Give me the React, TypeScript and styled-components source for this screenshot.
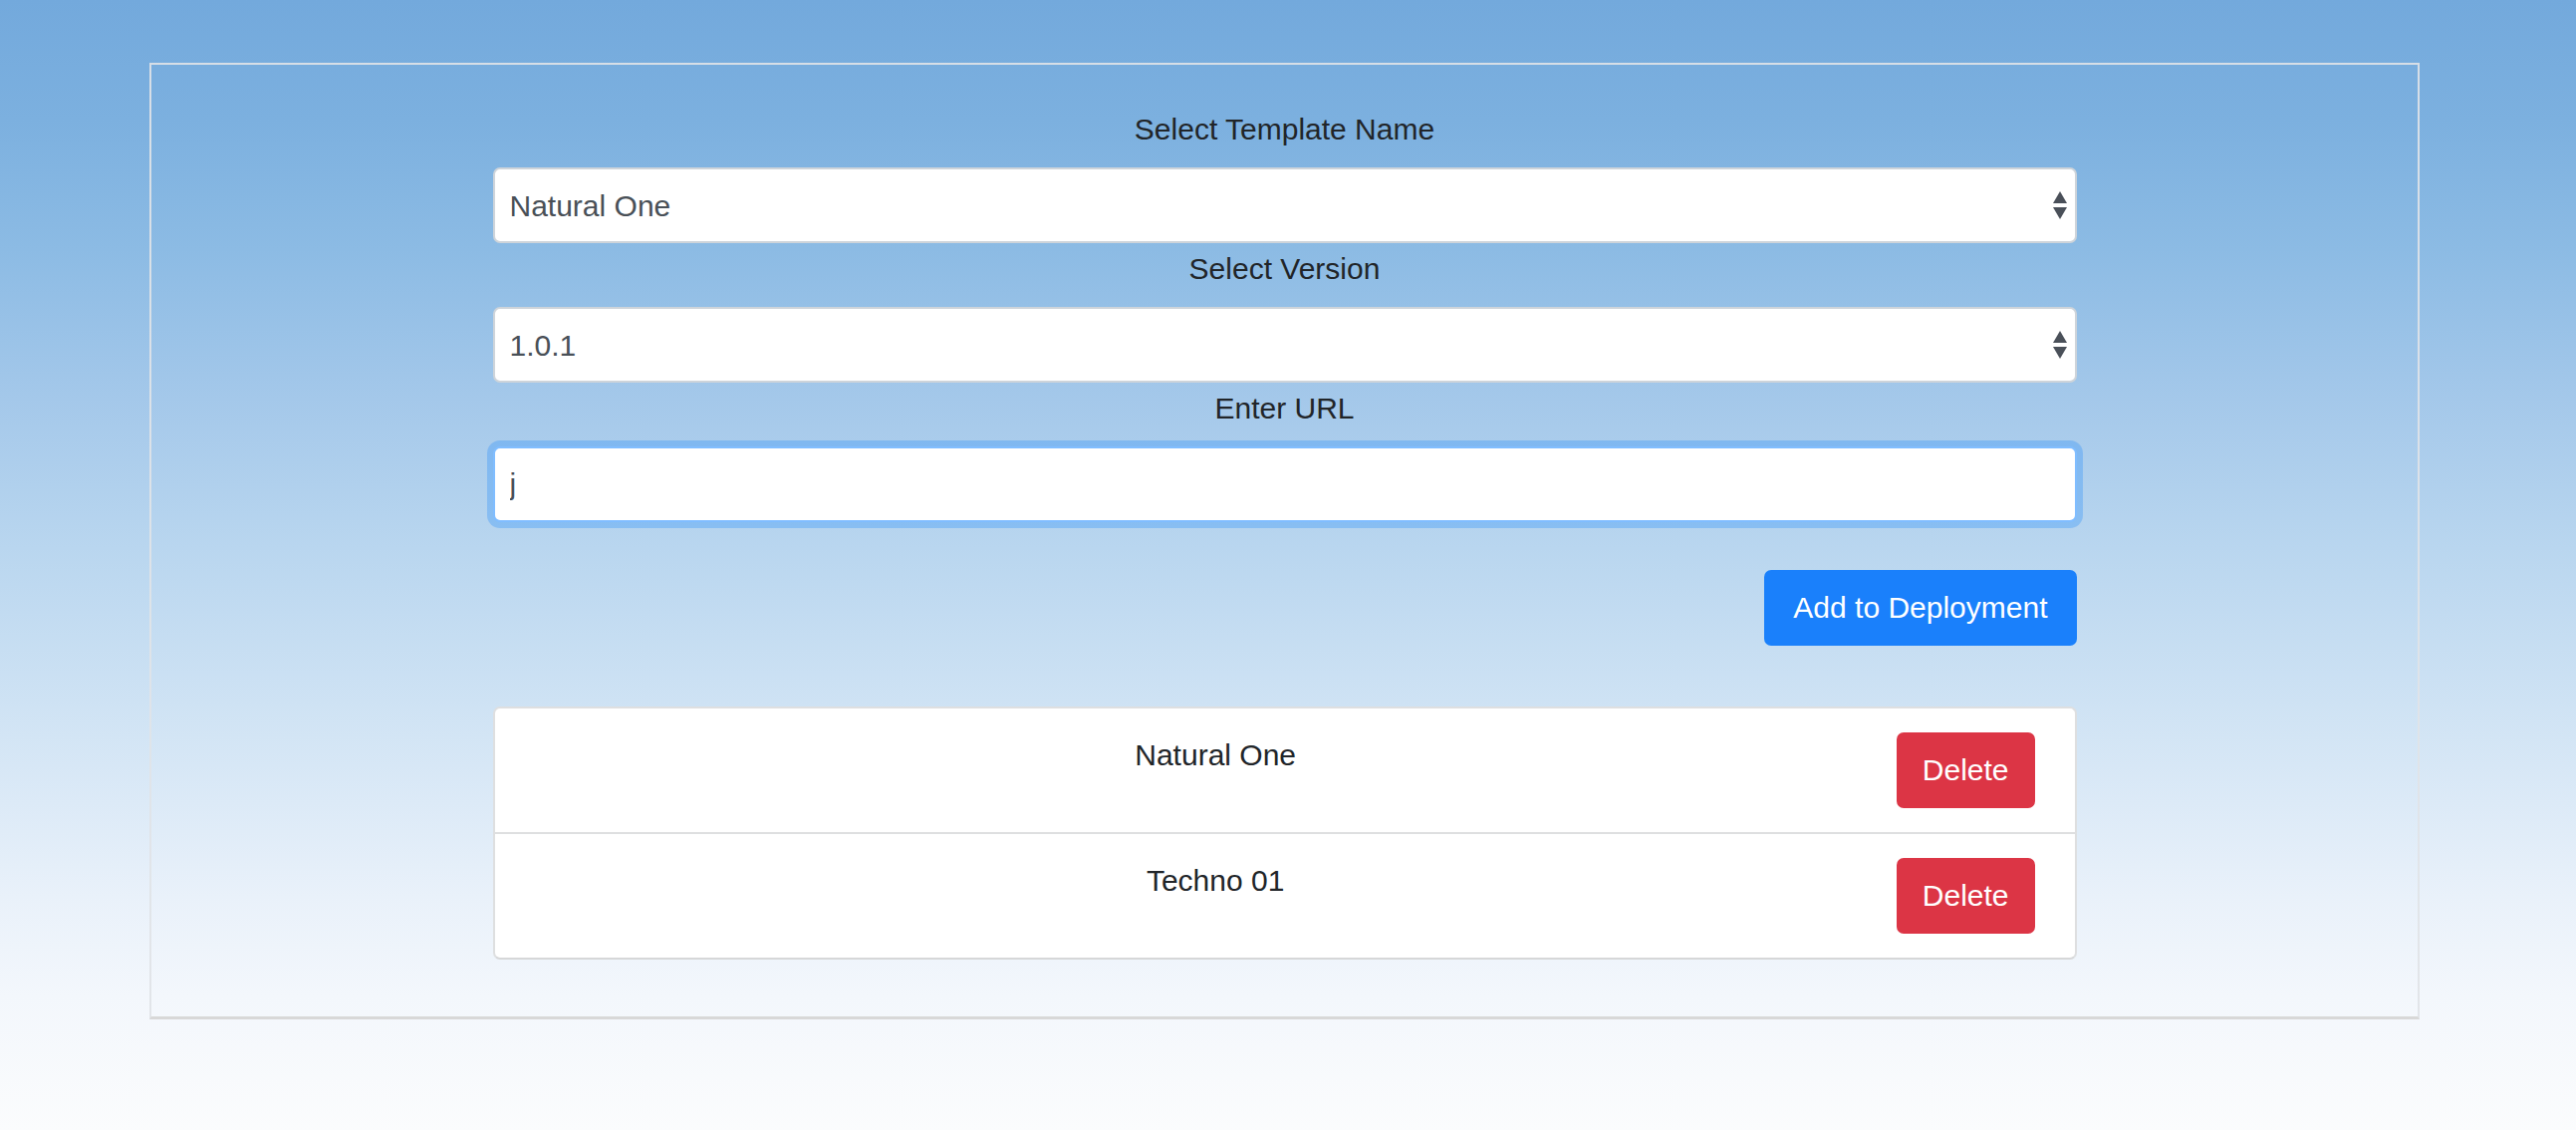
import styled, { createGlobalStyle } from 'styled-components';

const GlobalStyle = createGlobalStyle`
  html, body {
    margin: 0;
    padding: 0;
  }
  body {
    min-height: 1134px;
    font-family: 'Liberation Sans', Arial, sans-serif;
    background: linear-gradient(
      to bottom,
      #73a9dc 0px,
      #7cb0df 120px,
      #8cbbe4 250px,
      #a4c8ea 400px,
      #b9d6ef 550px,
      #d3e5f5 740px,
      #e9f1fa 900px,
      #f3f7fc 1000px,
      #fbfcfd 1134px
    );
  }
`;

type Item = { id: number; name: string };

const items: Item[] = [
  { id: 1, name: 'Natural One' },
  { id: 2, name: 'Techno 01' },
];

const SelectArrows = () => (
  <ArrowIcon width="16" height="28" viewBox="0 0 16 28">
    <path d="M8 0 L15 12 L1 12 Z" fill="#4a5059" />
    <path d="M1 16 L15 16 L8 28 Z" fill="#4a5059" />
  </ArrowIcon>
);

export default function App() {
  return (
    <>
      <GlobalStyle />
      <Page>
        <Frame>
          <Form>
            <Label>Select Template Name</Label>
            <SelectWrap>
              <Select defaultValue="natural">
                <option value="natural">Natural One</option>
                <option value="techno">Techno 01</option>
              </Select>
              <SelectArrows />
            </SelectWrap>

            <Label>Select Version</Label>
            <SelectWrap>
              <Select defaultValue="1.0.1">
                <option value="1.0.0">1.0.0</option>
                <option value="1.0.1">1.0.1</option>
              </Select>
              <SelectArrows />
            </SelectWrap>

            <Label>Enter URL</Label>
            <UrlInput type="text" defaultValue="j" autoFocus />

            <Actions>
              <Button $variant="primary">Add to Deployment</Button>
            </Actions>

            <List>
              {items.map((item) => (
                <ListRow key={item.id}>
                  <RowName>{item.name}</RowName>
                  <Button $variant="danger">Delete</Button>
                </ListRow>
              ))}
            </List>
          </Form>
        </Frame>
      </Page>
    </>
  );
}

const Page = styled.div`
  padding: 63px 0 0 150px;
`;

const Frame = styled.div`
  box-sizing: border-box;
  width: 2279px;
  height: 960px;
  border: 2px solid rgba(225, 228, 232, 0.9);
  border-bottom: 3px solid #d8d8d8;
  padding-top: 42px;
  display: flex;
  justify-content: center;
`;

const Form = styled.div`
  width: 1590px;
  display: flex;
  flex-direction: column;
`;

const Label = styled.label`
  display: block;
  text-align: center;
  font-size: 30px;
  line-height: 45px;
  color: #212529;
  margin-bottom: 16px;
`;

const SelectWrap = styled.div`
  position: relative;
  height: 76px;
  margin-bottom: 3px;
`;

const Select = styled.select`
  box-sizing: border-box;
  width: 100%;
  height: 100%;
  appearance: none;
  -webkit-appearance: none;
  background: #fff;
  border: 2px solid #ced4da;
  border-radius: 7px;
  padding: 0 56px 0 15px;
  font-family: inherit;
  font-size: 30px;
  color: #495057;
  outline: none;
`;

const ArrowIcon = styled.svg`
  position: absolute;
  right: 9px;
  top: 24px;
  pointer-events: none;
`;

const UrlInput = styled.input`
  box-sizing: border-box;
  width: 100%;
  height: 76px;
  background: #fff;
  border: 2px solid #80bdff;
  border-radius: 7px;
  padding: 0 15px;
  font-family: inherit;
  font-size: 30px;
  color: #495057;
  outline: none;
  box-shadow: 0 0 0 6px rgba(0, 123, 255, 0.25);
  caret-color: #212529;
`;

const Actions = styled.div`
  display: flex;
  justify-content: flex-end;
  margin-top: 48px;
`;

const Button = styled.button<{ $variant: 'primary' | 'danger' }>`
  box-sizing: border-box;
  height: 76px;
  padding: 0 ${(p) => (p.$variant === 'primary' ? '29px' : '26px')};
  border: none;
  border-radius: 7px;
  font-family: inherit;
  font-size: 30px;
  color: #fff;
  cursor: pointer;
  background: ${(p) => (p.$variant === 'primary' ? '#1a80fb' : '#dc3545')};
`;

const List = styled.div`
  margin-top: 61px;
  background: #fff;
  border: 2px solid #dedfe0;
  border-bottom-color: #d6d7d8;
  border-radius: 7px;
  display: flex;
  flex-direction: column;
`;

const ListRow = styled.div`
  display: flex;
  align-items: flex-start;
  padding: 24px 40px;

  & + & {
    border-top: 2px solid #dedfe0;
  }
`;

const RowName = styled.div`
  flex: 1;
  text-align: center;
  font-size: 30px;
  line-height: 45px;
  color: #212529;
`;
